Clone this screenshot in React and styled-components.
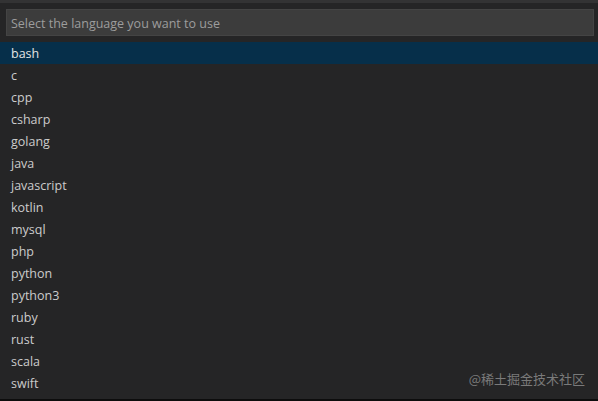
import React from 'react'
import styled, { createGlobalStyle } from 'styled-components'

const GlobalStyle = createGlobalStyle`
  html, body {
    margin: 0;
    padding: 0;
    background: #252526;
  }
  body {
    font-family: 'Open Sans', 'Noto Sans', sans-serif;
  }
`

const Container = styled.div`
  position: relative;
  width: 598px;
  height: 401px;
  overflow: hidden;
  background: #252526;
  display: flex;
  flex-direction: column;
  border-top: 3px solid #333334;
  border-bottom: 2px solid #0d0d0d;
  box-sizing: border-box;
`

const InputWrap = styled.div`
  padding: 6px 4px 6px 6px;
`

const SearchInput = styled.div`
  height: 27px;
  background: #3c3c3c;
  border: 1px solid #444;
  box-sizing: border-box;
  display: flex;
  align-items: center;
  padding: 1px 0 0 4px;
  font-size: 12.5px;
  color: #9d9d9d;
`

const List = styled.ul`
  list-style: none;
  margin: 0;
  padding: 0;
`

const Item = styled.li`
  height: 22px;
  display: flex;
  align-items: center;
  padding-left: 11px;
  font-size: 12.5px;
  color: ${(p) => (p.$active ? '#e4e4e4' : '#cccccc')};
  background: ${(p) => (p.$active ? '#062f4a' : 'transparent')};
`

const Watermark = styled.span`
  position: absolute;
  right: 13px;
  bottom: 11px;
  font-size: 13px;
  color: #7a7a7a;
  font-family: 'Noto Sans CJK SC', sans-serif;
`

const languages = [
  'bash', 'c', 'cpp', 'csharp', 'golang', 'java', 'javascript', 'kotlin',
  'mysql', 'php', 'python', 'python3', 'ruby', 'rust', 'scala', 'swift',
]

const App = () => {
  return (
    <Container>
      <GlobalStyle />
      <InputWrap>
        <SearchInput>Select the language you want to use</SearchInput>
      </InputWrap>
      <List>
        {languages.map((lang, i) => (
          <Item key={lang} $active={i === 0}>
            {lang}
          </Item>
        ))}
      </List>
      <Watermark>@稀土掘金技术社区</Watermark>
    </Container>
  )
}

export default App
